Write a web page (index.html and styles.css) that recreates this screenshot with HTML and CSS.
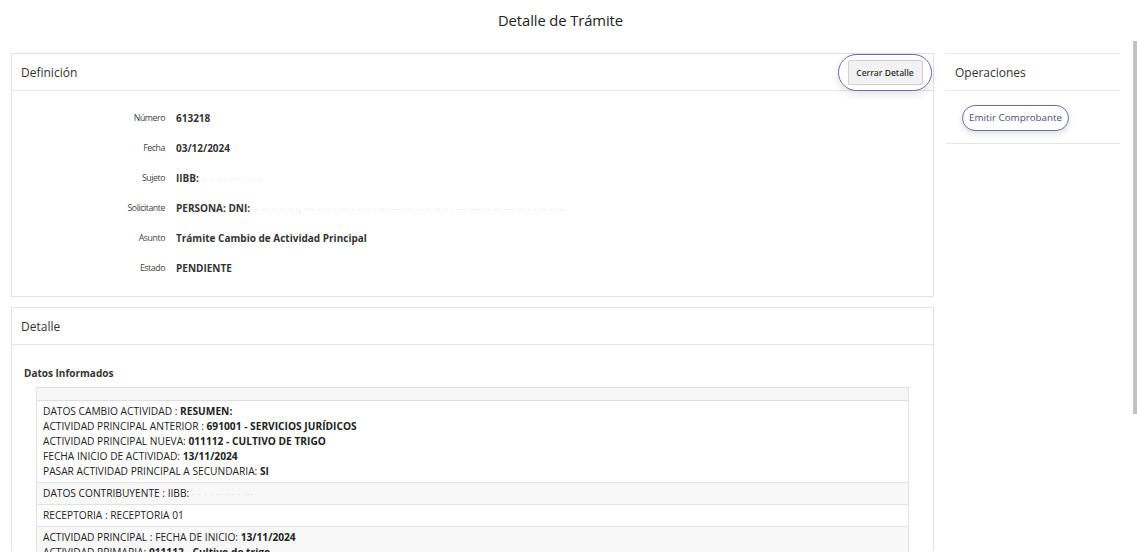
FILE: index.html
```html
<!DOCTYPE html>
<html lang="es">
<head>
<meta charset="utf-8">
<title>Detalle de Trámite</title>
<link rel="stylesheet" href="styles.css">
</head>
<body>
<h1 class="title">Detalle de Trámite</h1>
<div class="layout">
  <div class="main">
    <section class="panel def">
      <header class="panel-head">
        <span class="panel-title">Definición</span>
        <span class="focus-ring"><button class="btn-close">Cerrar Detalle</button></span>
      </header>
      <div class="panel-body def-body">
        <div class="row"><span class="lbl">Número</span><span class="val">613218</span></div>
        <div class="row"><span class="lbl">Fecha</span><span class="val">03/12/2024</span></div>
        <div class="row"><span class="lbl">Sujeto</span><span class="val">IIBB: <span class="redact">·· · ··· ·····  ·· ··</span></span></div>
        <div class="row"><span class="lbl">Solicitante</span><span class="val">PERSONA: DNI: <span class="redact">·· ·· ·· ·· · ·, ··· ·· · · ··· · ·· · · ··· ···· ·· ·· ·· ·· · · ··· ···· ·· ·· ···· ·· · · ·· ·· ··</span></span></div>
        <div class="row"><span class="lbl">Asunto</span><span class="val">Trámite Cambio de Actividad Principal</span></div>
        <div class="row"><span class="lbl">Estado</span><span class="val">PENDIENTE</span></div>
      </div>
    </section>
    <section class="panel det">
      <header class="panel-head"><span class="panel-title">Detalle</span></header>
      <div class="det-body">
        <div class="sub-title">Datos Informados</div>
        <div class="tbl">
          <div class="tr th"></div>
          <div class="tr">
            <div>DATOS CAMBIO ACTIVIDAD : <b>RESUMEN:</b></div>
            <div>ACTIVIDAD PRINCIPAL ANTERIOR : <b>691001 - SERVICIOS JURÍDICOS</b></div>
            <div>ACTIVIDAD PRINCIPAL NUEVA: <b>011112 - CULTIVO DE TRIGO</b></div>
            <div>FECHA INICIO DE ACTIVIDAD: <b>13/11/2024</b></div>
            <div>PASAR ACTIVIDAD PRINCIPAL A SECUNDARIA: <b>SI</b></div>
          </div>
          <div class="tr alt"><div>DATOS CONTRIBUYENTE : IIBB: <span class="redact">· · · · ·· ··· · ···</span></div></div>
          <div class="tr"><div>RECEPTORIA : RECEPTORIA 01</div></div>
          <div class="tr alt">
            <div>ACTIVIDAD PRINCIPAL : FECHA DE INICIO: <b>13/11/2024</b></div>
            <div>ACTIVIDAD PRIMARIA: <b>011112 - Cultivo de trigo</b></div>
          </div>
        </div>
      </div>
    </section>
  </div>
  <aside class="side">
    <header class="panel-head side-head"><span class="panel-title">Operaciones</span></header>
    <div class="side-body"><button class="btn-pill">Emitir Comprobante</button></div>
  </aside>
</div>
<div class="scroll-thumb"></div>
</body>
</html>
```
FILE: styles.css
```css
html, body { margin: 0; padding: 0; }
body {
  font-family: "Open Sans", "Noto Sans", sans-serif;
  color: #222;
  background: #fff;
  width: 1137px;
  height: 552px;
  overflow: hidden;
  position: relative;
}
.title {
  margin: 0;
  padding-top: 10px;
  width: 1121px;
  height: 53px;
  box-sizing: border-box;
  text-align: center;
  font-size: 14.8px;
  font-weight: 400;
  color: #222;
  letter-spacing: -0.1px;
}
.layout {
  display: flex;
  padding-left: 11px;
  gap: 12px;
}
.main { width: 923px; display: flex; flex-direction: column; gap: 10px; }
.panel {
  border: 1px solid #e2e2e2;
  background: #fff;
}
.panel-head {
  height: 37px;
  display: flex;
  align-items: center;
  justify-content: space-between;
  padding: 0 1px 0 9px;
  border-bottom: 1px solid #e6e6e6;
  box-sizing: border-box;
}
.panel-title { font-size: 12px; color: #333; font-weight: 500; }
.focus-ring {
  display: flex;
  align-items: center;
  justify-content: center;
  width: 94px;
  height: 37px;
  box-sizing: border-box;
  border: 1.5px solid #6b6ba6;
  border-radius: 19px;
  box-shadow: 0 3px 8px rgba(0,0,0,0.12);
}
.btn-close {
  font-family: inherit;
  font-size: 8.5px;
  font-weight: 600;
  color: #333;
  background: #f2f2f2;
  border: 1px solid #d0d0d0;
  border-radius: 2px;
  height: 25px;
  width: 75px;
  padding: 0;
}
.def-body { padding: 12px 0 13px 0; height: 205px; box-sizing: border-box; }
.row { display: flex; align-items: center; height: 30px; }
.lbl { width: 153px; text-align: right; font-size: 8.8px; letter-spacing: -0.45px; color: #444; padding-right: 11px; }
.val { font-size: 10px; font-weight: 700; color: #333; }
.redact { font-weight: 400; color: #c9c9c9; letter-spacing: 1px; font-size: 8px; }
.det { border-bottom: none; }
.det-body { padding: 21px 24px 0 12px; height: 206px; box-sizing: border-box; }
.sub-title { font-size: 10px; font-weight: 700; color: #333; margin-bottom: 7px; }
.tbl {
  margin-left: 12px;
  border-left: 1px solid #e2e2e2;
  border-right: 1px solid #e2e2e2;
  border-top: 1px solid #ddd;
  font-size: 10.2px;
  color: #222;
  line-height: 15px;
}
.tbl b { font-weight: 700; }
.tr { padding: 3px 6px; border-bottom: 1px solid #e2e2e2; }
.tr.th { background: #f7f7f7; height: 12px; padding: 0; border-bottom: 1px solid #ddd; }
.tr.alt { background: #f8f8f8; }
.side { width: 174px; }
.side-head {
  border-top: 1px solid #e6e6e6;
  height: 38px;
}
.side-body {
  padding: 13px 0 12px 16px;
  border-bottom: 1px solid #e6e6e6;
}
.btn-pill {
  font-family: inherit;
  font-size: 9.8px;
  color: #4a4a78;
  background: #fff;
  border: 1.5px solid #6b6ba6;
  border-radius: 13px;
  height: 26px;
  padding: 0 6px;
  box-shadow: 0 3px 6px rgba(0,0,0,0.12);
}
.scroll-thumb {
  position: absolute;
  left: 1133px;
  top: 41px;
  width: 4px;
  height: 373px;
  background: #c2c2c2;
}
```
